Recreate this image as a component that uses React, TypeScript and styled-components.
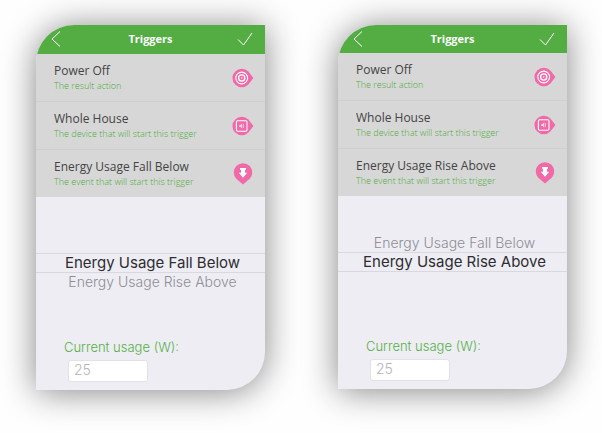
import React, { useState } from "react";
import styled, { createGlobalStyle } from "styled-components";

const GlobalStyle = createGlobalStyle`
  *, *::before, *::after { box-sizing: border-box; }
  body { margin: 0; background: #fefefe; }
`;

const titleFont = `"Open Sans", "Noto Sans", sans-serif`;
const bodyFont = `Inter, "Noto Sans", sans-serif`;
const green = "#53ad43";
const pink = "#f06aa8";

const Page = styled.main`
  display: grid;
  grid-template-columns: 1fr 1fr;
  align-items: start;
  gap: 73px;
  padding: 25px 35px 43px 36px;
`;

const Screen = styled.section`
  display: flex;
  flex-direction: column;
  overflow: hidden;
  border-radius: 38px 0 38px 0;
  background: #eeedf4;
  box-shadow: 0 2px 34px rgba(0, 0, 0, 0.48);
`;

const Header = styled.header<{ $short: boolean }>`
  display: grid;
  grid-template-columns: 30px 1fr 30px;
  align-items: center;
  height: ${(p) => (p.$short ? 28 : 29)}px;
  padding: 0 5px 1px;
  background: ${green};
`;

const Title = styled.h1`
  margin: 0;
  color: #fff;
  font: 700 11px/20px ${titleFont};
  text-align: center;
`;

const IconButton = styled.button`
  display: flex;
  justify-content: center;
  align-items: center;
  padding: 0;
  border: 0;
  background: none;
`;

const LineIcon = styled.svg`
  display: block;
  fill: none;
  stroke: #fff;
  stroke-width: 1;
`;

const Rows = styled.ul`
  margin: 0;
  padding: 0;
  list-style: none;
  background: #d7d7d7;
`;

const Row = styled.li`
  display: flex;
  align-items: center;
  justify-content: space-between;
  padding: 9px 11px 9px 18px;
  & + & { border-top: 1px solid #cfcfcf; }
`;

const RowTitle = styled.div`
  color: #444;
  font: 400 12px/16px ${titleFont};
  white-space: nowrap;
`;

const RowHint = styled.div`
  color: #4dac3c;
  font: 300 9px/13px ${titleFont};
  white-space: nowrap;
`;

const Badge = styled.svg`
  display: block;
  flex: none;
`;

const Wheel = styled.div`
  display: grid;
  grid-template-rows: 18px 20px 18px;
  margin-top: 38px;
`;

const Option = styled.button<{ $row: number; $selected: boolean }>`
  grid-row: ${(p) => p.$row};
  padding: 0 0 0 4px;
  border: 0 solid #d9d8de;
  border-width: ${(p) => (p.$selected ? "1px 0" : "0")};
  background: none;
  overflow: hidden;
  color: ${(p) => (p.$selected ? "#2d2d30" : "#8f8e94")};
  font: ${(p) => (p.$selected ? "400 15px/18px" : "300 14px/18px")} ${bodyFont};
  text-align: center;
  white-space: nowrap;
`;

const Field = styled.div`
  display: flex;
  flex-direction: column;
  align-items: flex-start;
  gap: 3px;
  margin-top: 46px;
  padding: 0 28px 8px;
`;

const FieldLabel = styled.label`
  color: #55b045;
  font: 300 13px/20px ${bodyFont};
`;

const FieldInput = styled.input`
  width: 80px;
  height: 22px;
  margin-left: 4px;
  padding: 0 5px 4px;
  border: 1px solid #e2e1e6;
  border-radius: 3px;
  background: #fff;
  color: #b5b5b8;
  font: 300 14px/16px ${bodyFont};
`;

type Glyph = "target" | "device" | "event";

function PinBadge({ glyph }: { glyph: Glyph }) {
  if (glyph === "event") {
    return (
      <Badge width="22" height="22" viewBox="0 0 22 22" aria-hidden="true">
        <path d="M11 21.6 L4.3 15.7 A9.2 9.2 0 1 1 17.7 15.7 Z" fill={pink} />
        <path d="M8 5h6v1.800h-1v2.900h2.200L11 14.800 6.800 9.700h2.200V6.800H8z" fill="#fff" />
      </Badge>
    );
  }
  return (
    <Badge width="22" height="22" viewBox="0 0 22 22" aria-hidden="true">
      <path d="M21.4 11 L16.4 17.5 A9.3 9.3 0 1 1 16.4 4.5 Z" fill={pink} />
      {glyph === "target" ? (
        <g fill="none" stroke="#fff">
          <circle cx="9.7" cy="11" r="5.9" strokeWidth="1.1" />
          <circle cx="9.7" cy="11" r="3.1" strokeWidth="1.3" />
          <circle cx="9.7" cy="11" r="0.8" fill="#fff" stroke="none" />
        </g>
      ) : (
        <g fill="none" stroke="#fff">
          <rect x="4.4" y="5.7" width="10.6" height="10.6" rx="1.2" strokeWidth="1.1" />
          <path d="M7.200 10h1.300l1.700-1.700v5.400L8.500 12H7.200z" fill="#fbd0e3" stroke="none" />
          <path d="M11.400 9v4" strokeWidth="0.8" strokeOpacity="0.7" />
        </g>
      )}
    </Badge>
  );
}

const events = ["Energy Usage Fall Below", "Energy Usage Rise Above"];

function TriggerScreen({ id, initial, short }: { id: string; initial: number; short: boolean }) {
  const [selected, setSelected] = useState(initial);
  const rows: { title: string; hint: string; glyph: Glyph }[] = [
    { title: "Power Off", hint: "The result action", glyph: "target" },
    { title: "Whole House", hint: "The device that will start this trigger", glyph: "device" },
    { title: events[selected], hint: "The event that will start this trigger", glyph: "event" },
  ];
  return (
    <Screen>
      <Header $short={short}>
        <IconButton aria-label="Back">
          <LineIcon width="10" height="18" viewBox="0 0 10 18">
            <path d="M9 1.500 1 9l8 7.500" />
          </LineIcon>
        </IconButton>
        <Title>Triggers</Title>
        <IconButton aria-label="Save">
          <LineIcon width="16" height="16" viewBox="0 0 16 16">
            <path d="M1 8.500 6.500 14 15 2" />
          </LineIcon>
        </IconButton>
      </Header>
      <Rows>
        {rows.map((row) => (
          <Row key={row.glyph}>
            <div>
              <RowTitle>{row.title}</RowTitle>
              <RowHint>{row.hint}</RowHint>
            </div>
            <PinBadge glyph={row.glyph} />
          </Row>
        ))}
      </Rows>
      <Wheel role="listbox" aria-label="Event">
        {events.map((name, i) => (
          <Option
            key={name}
            role="option"
            aria-selected={i === selected}
            $selected={i === selected}
            $row={2 + i - selected}
            onClick={() => setSelected(i)}
          >
            {name}
          </Option>
        ))}
      </Wheel>
      <Field>
        <FieldLabel htmlFor={id}>Current usage (W):</FieldLabel>
        <FieldInput id={id} defaultValue="25" inputMode="numeric" />
      </Field>
    </Screen>
  );
}

export default function App() {
  return (
    <>
      <GlobalStyle />
      <Page>
        <TriggerScreen id="usage-below" initial={0} short={false} />
        <TriggerScreen id="usage-above" initial={1} short />
      </Page>
    </>
  );
}
